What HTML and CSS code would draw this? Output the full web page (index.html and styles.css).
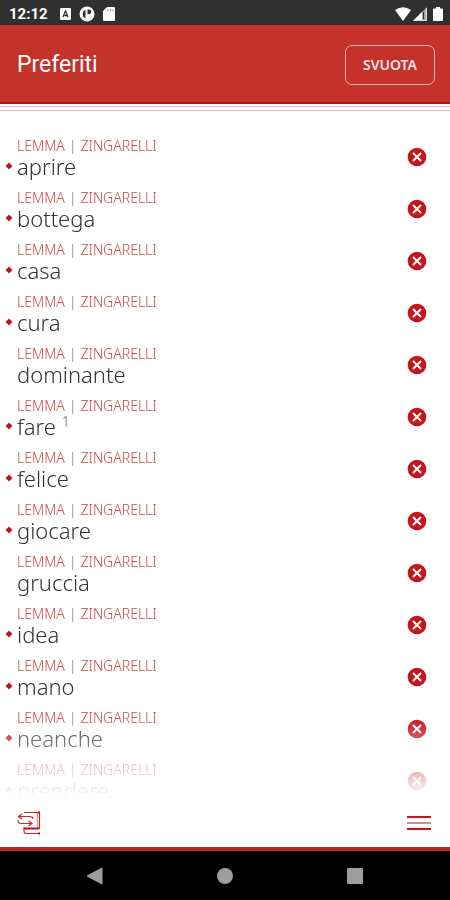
FILE: index.html
```html
<!DOCTYPE html>
<html lang="it">
<head>
    <meta charset="UTF-8">
    <meta name="viewport" content="width=device-width, initial-scale=1.0">
    <title>Preferiti</title>
    <link rel="stylesheet" href="styles.css">
</head>
<body>
    <div class="status-bar">
        <span class="time">12:12</span>
        <div class="status-icons">
            <svg width="11" height="12" viewBox="0 0 11 12"><rect width="11" height="12" rx="1" fill="#fff"/><path d="M3 9L5.500 3L8 9M4 7.500H7" fill="none" stroke="#303030" stroke-width="1.300"/></svg>
            <svg width="16" height="16" viewBox="0 0 16 16"><circle cx="8" cy="8" r="7.500" fill="#fff"/><path d="M6.500 3.500V12.500A5 5 0 0 1 6.500 3.500Z" fill="#303030"/><path d="M8.500 3.500H10A2.300 2.300 0 0 1 10 8.200H8.500Z" fill="#303030"/></svg>
            <svg width="12" height="14" viewBox="0 0 12 14"><path d="M4 0H11Q12 0 12 1V13Q12 14 11 14H1Q0 14 0 13V4Z" fill="#fff"/><path d="M5 2V4.500M7.500 2V4.500M10 2V4.500" stroke="#999"/></svg>
        </div>
        <div class="signal-icons">
            <svg width="16" height="14" viewBox="0 0 16 14"><path d="M0 3Q8-2.500 16 3L8 14Z" fill="#fff"/></svg>
            <svg width="14" height="14" viewBox="0 0 14 14"><path d="M14 0V14H0Z" fill="#a5a5a5"/><path d="M9 5V14H0Z" fill="#fff"/><path d="M1 13.500H13.500V1" fill="none" stroke="#ddd"/><path d="M10.500 5V12" stroke="#303030"/></svg>
            <svg class="battery" width="10" height="14" viewBox="0 0 10 14"><path d="M3 0H7V1.500H9Q10 1.500 10 2.500V13Q10 14 9 14H1Q0 14 0 13V2.500Q0 1.500 1 1.500H3Z" fill="#fff"/></svg>
        </div>
    </div>

    <header class="header">
        <h1>Preferiti</h1>
        <button class="clear-btn" type="button">SVUOTA</button>
    </header>
    <div class="stripes"></div>

    <!-- Saved words -->
    <main class="content">
        <ul class="words" id="words"></ul>
    </main>

    <nav class="toolbar">
        <button class="icon-btn" type="button" aria-label="Cambia dizionario">
            <svg width="24" height="24" viewBox="0 0 24 24" fill="none" stroke="#c62828" stroke-width="1.200">
                <path d="M7 1.500H22.500V17.500M22 22.500H9Q7 22.500 7 20V16"/>
                <path d="M20.500 2V17" stroke="#e29a9a"/>
                <path d="M7 17.500H22.500" stroke="#c00d10" stroke-width="2"/>
                <path d="M5 3L1.500 5.500L5 8M1.500 5.500H13Q16 5.500 16 8"/>
                <path d="M1 9Q1 12.500 4 12.500H15M11.500 10L15 12.500L11.500 15"/>
                <path d="M21 1.500H23M21 22.500H23" stroke="#c00d10" stroke-width="2"/>
            </svg>
        </button>
        <button class="icon-btn" type="button" aria-label="Menu">
            <svg width="24" height="16" viewBox="0 0 24 16"><path d="M0 2H24M0 14H24" stroke="#c4161c" stroke-width="2"/><path d="M0 8H24" stroke="#d98c8e" stroke-width="2"/></svg>
        </button>
    </nav>

    <div class="system-nav">
        <button class="icon-btn" type="button" aria-label="Indietro">
            <svg width="18" height="18" viewBox="0 0 18 18"><path d="M16 1V17L1 9Z" fill="#9e9e9e" stroke="#9e9e9e" stroke-linejoin="round"/></svg>
        </button>
        <button class="icon-btn" type="button" aria-label="Home">
            <svg width="18" height="18" viewBox="0 0 18 18"><circle cx="9" cy="9" r="8" fill="#9e9e9e"/></svg>
        </button>
        <button class="icon-btn" type="button" aria-label="Recenti">
            <svg width="18" height="18" viewBox="0 0 18 18"><rect x="1" y="1" width="16" height="16" rx="1" fill="#9e9e9e"/></svg>
        </button>
    </div>

    <script src="script.js"></script>
</body>
</html>
```

FILE: styles.css
```css
* {
    box-sizing: border-box;
}

body {
    margin: 0;
    height: 100vh;
    display: flex;
    flex-direction: column;
    background-color: #fff;
    color: #333;
    font-family: Roboto, sans-serif;
}

svg {
    display: block;
}

button {
    border: none;
    background: none;
    padding: 0;
    cursor: pointer;
}

.status-bar {
    flex: none;
    display: flex;
    align-items: center;
    height: 25px;
    padding: 2px 7px 0 9px;
    background-color: #303030;
    color: #fff;
}

.time {
    font-size: 15px;
    font-weight: 700;
    line-height: 20px;
}

.status-icons {
    display: flex;
    align-items: center;
    gap: 8px;
    margin-left: 12px;
}

.signal-icons {
    display: flex;
    gap: 2px;
    margin-left: auto;
}

.battery {
    margin-left: 4px;
}

.header {
    flex: none;
    display: flex;
    align-items: center;
    justify-content: space-between;
    height: 79px;
    padding: 2px 15px 0 17px;
    background-color: #c5322b;
    border-bottom: 2px solid #b80f12;
}

h1 {
    margin: 0;
    color: #fff;
    font-size: 23px;
    font-weight: 400;
    line-height: 28px;
}

.clear-btn {
    height: 40px;
    padding: 0 17px;
    border: 1px solid #f5b5b2;
    border-radius: 7px;
    color: #fbe4e3;
    font-family: "Noto Sans", sans-serif;
    font-size: 14px;
    font-weight: 600;
}

.stripes {
    flex: none;
    height: 7px;
    background: linear-gradient(#fff 2px, #e9b5b7 2px, #e9b5b7 3px, #fff 3px, #fff 6px, #e9b5b7 6px);
}

.content {
    flex: 1;
    min-height: 0;
    overflow: hidden;
    padding-top: 26px;
    -webkit-mask-image: linear-gradient(#000, #000 calc(100% - 80px), transparent);
    mask-image: linear-gradient(#000, #000 calc(100% - 80px), transparent);
}

.words {
    list-style: none;
    margin: 0;
    padding: 0;
}

.word {
    display: flex;
    align-items: flex-start;
    justify-content: space-between;
    height: 52px;
    padding: 0 23px 0 5px;
}

.entry {
    display: grid;
    grid-template-columns: 8px auto;
    column-gap: 4px;
    align-items: center;
}

.source {
    display: flex;
    gap: 4px;
    grid-column: 2;
    color: #ca4a4b;
    font-family: "Noto Sans", sans-serif;
    font-size: 14px;
    font-weight: 300;
    line-height: 17px;
}

.divider {
    color: #777;
}

.lemma {
    grid-column: 2;
    font-family: "Noto Sans", sans-serif;
    font-size: 22px;
    font-weight: 300;
    line-height: 24px;
}

.lemma sup {
    color: #666;
    font-size: 14px;
    line-height: 0;
}

.remove-btn {
    margin-top: 10px;
}

.toolbar {
    flex: none;
    display: flex;
    align-items: center;
    justify-content: space-between;
    height: 54px;
    padding: 2px 19px 0 17px;
    border-bottom: 4px solid #b92522;
}

.system-nav {
    flex: none;
    display: flex;
    align-items: center;
    justify-content: center;
    gap: 112px;
    height: 49px;
    background-color: #000;
}
```

FILE: script.js
```js
const words = [
    { lemma: "aprire", basic: true },
    { lemma: "bottega", basic: true },
    { lemma: "casa", basic: true },
    { lemma: "cura", basic: true },
    { lemma: "dominante", basic: false },
    { lemma: "fare", basic: true, sense: 1 },
    { lemma: "felice", basic: true },
    { lemma: "giocare", basic: true },
    { lemma: "gruccia", basic: false },
    { lemma: "idea", basic: true },
    { lemma: "mano", basic: true },
    { lemma: "neanche", basic: true },
    { lemma: "prendere", basic: true }
];

// Red diamond marks the basic vocabulary
const diamond = '<svg width="8" height="8" viewBox="0 0 8 8"><path d="M4 .5L7.500 4L4 7.500L.5 4Z" fill="#c4161c"/></svg>';
const cross = '<svg width="20" height="20" viewBox="0 0 20 20"><circle cx="10" cy="10" r="9.300" fill="#c4161c"/><path d="M6 6L14 14M14 6L6 14" stroke="#fff" stroke-width="2"/></svg>';

const list = document.getElementById('words');

words.forEach(word => {
    const item = document.createElement('li');
    item.className = 'word';
    item.innerHTML = `
        <div class="entry">
            <div class="source"><span>LEMMA</span><span class="divider">|</span><span>ZINGARELLI</span></div>
            ${word.basic ? diamond : ''}
            <div class="lemma">${word.lemma}${word.sense ? ` <sup>${word.sense}</sup>` : ''}</div>
        </div>
        <button class="remove-btn" type="button" aria-label="Rimuovi ${word.lemma}">${cross}</button>`;
    item.querySelector('.remove-btn').addEventListener('click', () => item.remove());
    list.appendChild(item);
});

document.querySelector('.clear-btn').addEventListener('click', () => {
    list.innerHTML = '';
});
```
